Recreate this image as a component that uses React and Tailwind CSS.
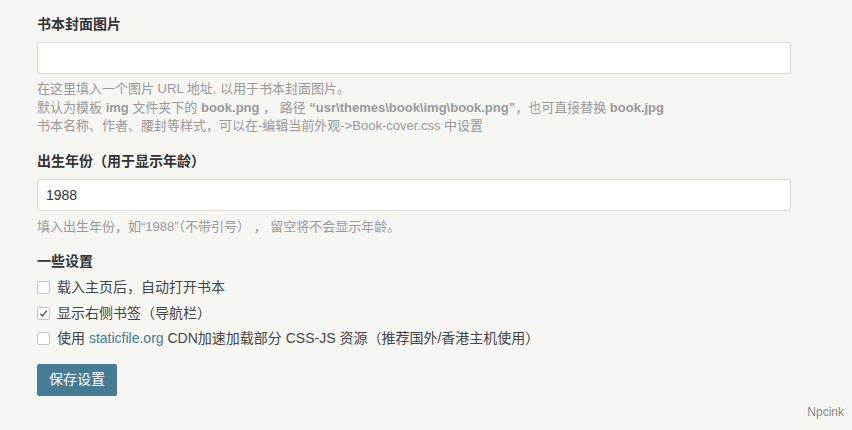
import { useState } from "react";

function Check({ checked, onChange, children }) {
  return (
    <label className="flex h-[25.5px] items-center cursor-pointer">
      <span
        onClick={onChange}
        className="flex h-[13px] w-[13px] items-center justify-center rounded-[2px] border border-[#c4c4c4] bg-white"
      >
        {checked && (
          <svg width="9" height="9" viewBox="0 0 10 10" fill="none" stroke="#555" strokeWidth="1.6">
            <path d="M1.5 5.2 L4 7.8 L8.6 1.8" />
          </svg>
        )}
      </span>
      <span className="ml-[7px] text-[14px] text-[#444]">{children}</span>
    </label>
  );
}

export default function App() {
  const [opts, setOpts] = useState({ open: false, nav: true, cdn: false });
  const toggle = (k) => setOpts((o) => ({ ...o, [k]: !o[k] }));

  return (
    <div className="relative min-h-[430px] bg-[#f6f6f3] pl-[37px] pt-[14px] font-['Liberation_Sans','Noto_Sans_CJK_SC',sans-serif]">
      <div className="w-[754px]">
        <div className="text-[14px] font-bold leading-[20px] text-[#333]">书本封面图片</div>
        <input
          type="text"
          className="mt-[8px] block h-[32px] w-full rounded-[2px] border border-[#d9d9d6] bg-white px-[8px] text-[14px] text-[#333] outline-none"
        />
        <div className="mt-[6px] text-[13px] leading-[18.5px] text-[#999]">
          <p>在这里填入一个图片 URL 地址, 以用于书本封面图片。</p>
          <p>
            默认为模板 <b>img</b> 文件夹下的 <b>book.png</b> ， 路径{" "}
            <b>“usr\themes\book\img\book.png”</b>，也可直接替换 <b>book.jpg</b>
          </p>
          <p>书本名称、作者、腰封等样式，可以在-编辑当前外观-&gt;Book-cover.css 中设置</p>
        </div>

        <div className="mt-[15px] text-[14px] font-bold leading-[20px] text-[#333]">出生年份（用于显示年龄）</div>
        <input
          type="text"
          defaultValue="1988"
          className="mt-[8px] block h-[32px] w-full rounded-[2px] border border-[#d9d9d6] bg-white px-[8px] text-[14px] text-[#333] outline-none"
        />
        <div className="mt-[7px] text-[13px] leading-[18.5px] text-[#999]">
          <p>填入出生年份，如“1988”（不带引号） ， 留空将不会显示年龄。</p>
        </div>

        <div className="mt-[15px] text-[14px] font-bold leading-[20px] text-[#333]">一些设置</div>
        <div className="mt-[4px]">
          <Check checked={opts.open} onChange={() => toggle("open")}>
            载入主页后，自动打开书本
          </Check>
          <Check checked={opts.nav} onChange={() => toggle("nav")}>
            显示右侧书签（导航栏）
          </Check>
          <Check checked={opts.cdn} onChange={() => toggle("cdn")}>
            使用 <a className="text-[#467b96]">staticfile.org</a> CDN加速加载部分 CSS-JS 资源（推荐国外/香港主机使用）
          </Check>
        </div>

        <button
          type="button"
          className="mt-[12px] h-[32px] w-[80px] rounded-[2px] bg-[#467b96] text-[14px] text-white"
        >
          保存设置
        </button>
      </div>

      <div className="absolute bottom-[9px] right-[8px] text-[12px] text-[#888]">Npcink</div>
    </div>
  );
}
